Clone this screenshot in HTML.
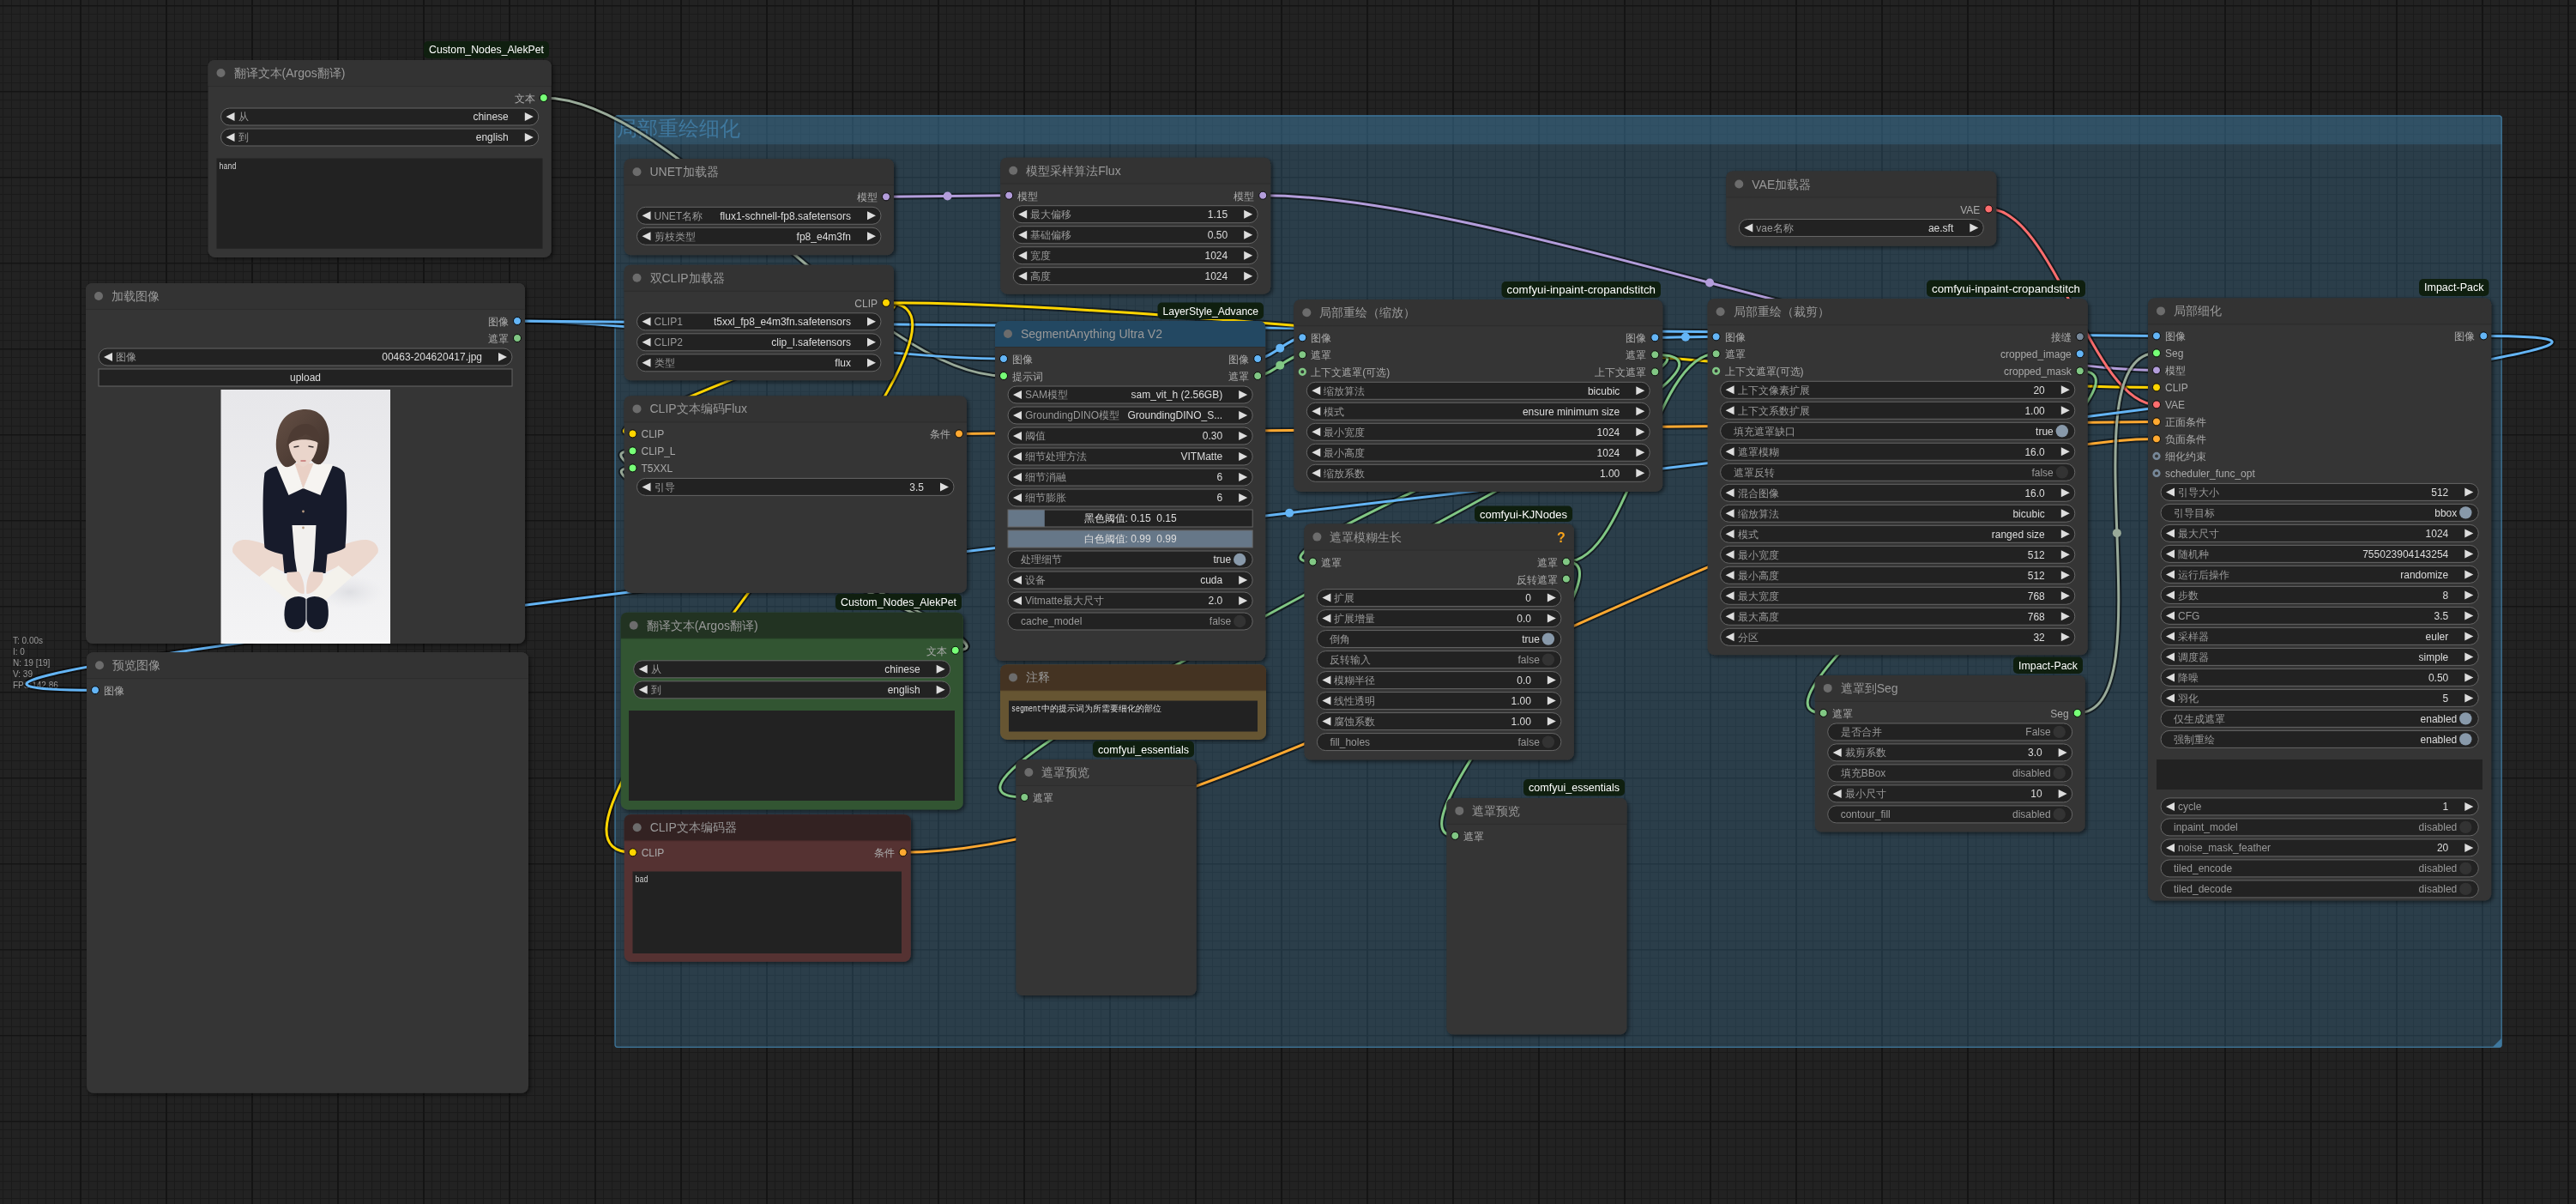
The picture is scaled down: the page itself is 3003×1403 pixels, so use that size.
<!DOCTYPE html>
<html><head><meta charset="utf-8"><title>ComfyUI</title>
<style>html,body{margin:0;padding:0;background:#222;width:3003px;height:1403px;overflow:hidden;font-family:'Liberation Sans', sans-serif}</style>
</head><body>
<svg width="3003" height="1403" viewBox="0 0 3003 1403" style="position:absolute;left:0;top:0;will-change:transform;font-family:'Liberation Sans', sans-serif">
<defs>
<pattern id="grid" patternUnits="userSpaceOnUse" x="3" y="6" width="100" height="100"><rect width="100" height="100" fill="#222222"/>
<rect x="0" y="0" width="1" height="100" fill="#1a1a1a"/>
<rect x="0" y="0" width="100" height="1" fill="#1a1a1a"/>
<rect x="10" y="0" width="1" height="100" fill="#1a1a1a"/>
<rect x="0" y="10" width="100" height="1" fill="#1a1a1a"/>
<rect x="20" y="0" width="1" height="100" fill="#1a1a1a"/>
<rect x="0" y="20" width="100" height="1" fill="#1a1a1a"/>
<rect x="30" y="0" width="1" height="100" fill="#1a1a1a"/>
<rect x="0" y="30" width="100" height="1" fill="#1a1a1a"/>
<rect x="40" y="0" width="1" height="100" fill="#1a1a1a"/>
<rect x="0" y="40" width="100" height="1" fill="#1a1a1a"/>
<rect x="50" y="0" width="1" height="100" fill="#1a1a1a"/>
<rect x="0" y="50" width="100" height="1" fill="#1a1a1a"/>
<rect x="60" y="0" width="1" height="100" fill="#1a1a1a"/>
<rect x="0" y="60" width="100" height="1" fill="#1a1a1a"/>
<rect x="70" y="0" width="1" height="100" fill="#1a1a1a"/>
<rect x="0" y="70" width="100" height="1" fill="#1a1a1a"/>
<rect x="80" y="0" width="1" height="100" fill="#1a1a1a"/>
<rect x="0" y="80" width="100" height="1" fill="#1a1a1a"/>
<rect x="90" y="0" width="1" height="100" fill="#1a1a1a"/>
<rect x="0" y="90" width="100" height="1" fill="#1a1a1a"/>
<rect x="90" y="0" width="2" height="100" fill="#141414"/><rect x="0" y="0" width="100" height="1.5" fill="#141414"/>
</pattern>
<filter id="sh" x="-5%" y="-5%" width="110%" height="110%"><feDropShadow dx="2" dy="2" stdDeviation="2.5" flood-color="#000" flood-opacity="0.55"/></filter>
</defs>
<rect width="3003" height="1403" fill="url(#grid)"/>
<rect x="716.3" y="134.2" width="2200.7" height="1086.8" rx="4" fill="#3f789e" fill-opacity="0.32"/>
<path d="M716.3,168.2 L716.3,138.2 Q716.3,134.2 720.3,134.2 L2913.0,134.2 Q2917.0,134.2 2917.0,138.2 L2917.0,168.2 Z" fill="#3f789e" fill-opacity="0.32"/>
<rect x="717.0999999999999" y="135.0" width="2199.1" height="1085.2" rx="3" fill="none" stroke="#3f789e" stroke-opacity="0.85" stroke-width="1.4"/>
<text x="719.00" y="157.50" font-size="24" fill="#3f789e" text-anchor="start" >局部重绘细化</text>
<path d="M2916.0 1210.0 L2916.0 1220.0 L2906.0 1220.0 Z" fill="#3f789e"/>
<text x="15.00" y="750.00" font-size="10" fill="#9a9a9a" text-anchor="start" >T: 0.00s</text>
<text x="15.00" y="763.00" font-size="10" fill="#9a9a9a" text-anchor="start" >I: 0</text>
<text x="15.00" y="776.00" font-size="10" fill="#9a9a9a" text-anchor="start" >N: 19 [19]</text>
<text x="15.00" y="789.00" font-size="10" fill="#9a9a9a" text-anchor="start" >V: 39</text>
<text x="15.00" y="802.00" font-size="10" fill="#9a9a9a" text-anchor="start" >FPS:142.86</text>
<path d="M633.80,114.00 C790.42,114.00 1013.38,438.00 1170.00,438.00" fill="none" stroke="#000" stroke-opacity="0.5" stroke-width="7"/>
<path d="M633.80,114.00 C790.42,114.00 1013.38,438.00 1170.00,438.00" fill="none" stroke="#99AA99" stroke-width="3"/>
<circle cx="901.90" cy="276.00" r="5" fill="#99AA99"/>
<path d="M603.00,374.00 C745.18,374.00 1027.82,418.00 1170.00,418.00" fill="none" stroke="#000" stroke-opacity="0.5" stroke-width="7"/>
<path d="M603.00,374.00 C745.18,374.00 1027.82,418.00 1170.00,418.00" fill="none" stroke="#64B5F6" stroke-width="3"/>
<circle cx="886.50" cy="396.00" r="5" fill="#64B5F6"/>
<path d="M603.00,374.00 C1080.77,374.00 2036.23,391.40 2514.00,391.40" fill="none" stroke="#000" stroke-opacity="0.5" stroke-width="7"/>
<path d="M603.00,374.00 C1080.77,374.00 2036.23,391.40 2514.00,391.40" fill="none" stroke="#64B5F6" stroke-width="3"/>
<circle cx="1558.50" cy="382.70" r="5" fill="#64B5F6"/>
<path d="M1033.00,229.30 C1068.80,229.30 1140.40,227.70 1176.20,227.70" fill="none" stroke="#000" stroke-opacity="0.5" stroke-width="7"/>
<path d="M1033.00,229.30 C1068.80,229.30 1140.40,227.70 1176.20,227.70" fill="none" stroke="#B39DDB" stroke-width="3"/>
<circle cx="1104.60" cy="228.50" r="5" fill="#B39DDB"/>
<path d="M1472.20,227.70 C1737.58,227.70 2248.62,431.40 2514.00,431.40" fill="none" stroke="#000" stroke-opacity="0.5" stroke-width="7"/>
<path d="M1472.20,227.70 C1737.58,227.70 2248.62,431.40 2514.00,431.40" fill="none" stroke="#B39DDB" stroke-width="3"/>
<circle cx="1993.10" cy="329.55" r="5" fill="#B39DDB"/>
<path d="M1033.00,352.80 C1116.14,352.80 654.36,505.40 737.50,505.40" fill="none" stroke="#000" stroke-opacity="0.5" stroke-width="7"/>
<path d="M1033.00,352.80 C1116.14,352.80 654.36,505.40 737.50,505.40" fill="none" stroke="#FFD500" stroke-width="3"/>
<circle cx="885.25" cy="429.10" r="5" fill="#FFD500"/>
<path d="M1033.00,352.80 C1209.32,352.80 561.38,993.30 737.70,993.30" fill="none" stroke="#000" stroke-opacity="0.5" stroke-width="7"/>
<path d="M1033.00,352.80 C1209.32,352.80 561.38,993.30 737.70,993.30" fill="none" stroke="#FFD500" stroke-width="3"/>
<circle cx="885.35" cy="673.05" r="5" fill="#FFD500"/>
<path d="M1033.00,352.80 C1404.07,352.80 2142.93,451.40 2514.00,451.40" fill="none" stroke="#000" stroke-opacity="0.5" stroke-width="7"/>
<path d="M1033.00,352.80 C1404.07,352.80 2142.93,451.40 2514.00,451.40" fill="none" stroke="#FFD500" stroke-width="3"/>
<circle cx="1773.50" cy="402.10" r="5" fill="#FFD500"/>
<path d="M2318.30,243.50 C2393.40,243.50 2438.90,471.40 2514.00,471.40" fill="none" stroke="#000" stroke-opacity="0.5" stroke-width="7"/>
<path d="M2318.30,243.50 C2393.40,243.50 2438.90,471.40 2514.00,471.40" fill="none" stroke="#FF6E6E" stroke-width="3"/>
<circle cx="2416.15" cy="357.45" r="5" fill="#FF6E6E"/>
<path d="M1118.00,505.40 C1467.02,505.40 2164.98,491.40 2514.00,491.40" fill="none" stroke="#000" stroke-opacity="0.5" stroke-width="7"/>
<path d="M1118.00,505.40 C1467.02,505.40 2164.98,491.40 2514.00,491.40" fill="none" stroke="#FFA931" stroke-width="3"/>
<circle cx="1816.00" cy="498.40" r="5" fill="#FFA931"/>
<path d="M1052.70,993.30 C1437.38,993.30 2129.32,511.40 2514.00,511.40" fill="none" stroke="#000" stroke-opacity="0.5" stroke-width="7"/>
<path d="M1052.70,993.30 C1437.38,993.30 2129.32,511.40 2514.00,511.40" fill="none" stroke="#FFA931" stroke-width="3"/>
<circle cx="1783.35" cy="752.35" r="5" fill="#FFA931"/>
<path d="M1113.70,757.80 C1224.25,757.80 626.95,525.40 737.50,525.40" fill="none" stroke="#000" stroke-opacity="0.5" stroke-width="7"/>
<path d="M1113.70,757.80 C1224.25,757.80 626.95,525.40 737.50,525.40" fill="none" stroke="#99AA99" stroke-width="3"/>
<circle cx="925.60" cy="641.60" r="5" fill="#99AA99"/>
<path d="M1113.70,757.80 C1221.70,757.80 629.50,545.40 737.50,545.40" fill="none" stroke="#000" stroke-opacity="0.5" stroke-width="7"/>
<path d="M1113.70,757.80 C1221.70,757.80 629.50,545.40 737.50,545.40" fill="none" stroke="#99AA99" stroke-width="3"/>
<circle cx="925.60" cy="651.60" r="5" fill="#99AA99"/>
<path d="M1466.20,418.00 C1480.61,418.00 1503.89,393.30 1518.30,393.30" fill="none" stroke="#000" stroke-opacity="0.5" stroke-width="7"/>
<path d="M1466.20,418.00 C1480.61,418.00 1503.89,393.30 1518.30,393.30" fill="none" stroke="#64B5F6" stroke-width="3"/>
<circle cx="1492.25" cy="405.65" r="5" fill="#64B5F6"/>
<path d="M1466.20,438.00 C1480.61,438.00 1503.89,413.30 1518.30,413.30" fill="none" stroke="#000" stroke-opacity="0.5" stroke-width="7"/>
<path d="M1466.20,438.00 C1480.61,438.00 1503.89,413.30 1518.30,413.30" fill="none" stroke="#81C784" stroke-width="3"/>
<circle cx="1492.25" cy="425.65" r="5" fill="#81C784"/>
<path d="M1929.30,393.30 C1947.13,393.30 1982.77,392.30 2000.60,392.30" fill="none" stroke="#000" stroke-opacity="0.5" stroke-width="7"/>
<path d="M1929.30,393.30 C1947.13,393.30 1982.77,392.30 2000.60,392.30" fill="none" stroke="#64B5F6" stroke-width="3"/>
<circle cx="1964.95" cy="392.80" r="5" fill="#64B5F6"/>
<path d="M1929.30,413.30 C2045.85,413.30 1413.85,654.60 1530.40,654.60" fill="none" stroke="#000" stroke-opacity="0.5" stroke-width="7"/>
<path d="M1929.30,413.30 C2045.85,413.30 1413.85,654.60 1530.40,654.60" fill="none" stroke="#81C784" stroke-width="3"/>
<circle cx="1729.85" cy="533.95" r="5" fill="#81C784"/>
<path d="M1929.30,413.30 C2153.77,413.30 969.83,929.00 1194.30,929.00" fill="none" stroke="#000" stroke-opacity="0.5" stroke-width="7"/>
<path d="M1929.30,413.30 C2153.77,413.30 969.83,929.00 1194.30,929.00" fill="none" stroke="#81C784" stroke-width="3"/>
<circle cx="1561.80" cy="671.15" r="5" fill="#81C784"/>
<path d="M1825.90,654.60 C1900.58,654.60 1925.92,412.30 2000.60,412.30" fill="none" stroke="#000" stroke-opacity="0.5" stroke-width="7"/>
<path d="M1825.90,654.60 C1900.58,654.60 1925.92,412.30 2000.60,412.30" fill="none" stroke="#81C784" stroke-width="3"/>
<circle cx="1913.25" cy="533.45" r="5" fill="#81C784"/>
<path d="M1825.90,654.60 C1912.05,654.60 1610.15,973.90 1696.30,973.90" fill="none" stroke="#000" stroke-opacity="0.5" stroke-width="7"/>
<path d="M1825.90,654.60 C1912.05,654.60 1610.15,973.90 1696.30,973.90" fill="none" stroke="#81C784" stroke-width="3"/>
<circle cx="1761.10" cy="814.25" r="5" fill="#81C784"/>
<path d="M2424.80,432.30 C2549.39,432.30 2001.11,830.90 2125.70,830.90" fill="none" stroke="#000" stroke-opacity="0.5" stroke-width="7"/>
<path d="M2424.80,432.30 C2549.39,432.30 2001.11,830.90 2125.70,830.90" fill="none" stroke="#81C784" stroke-width="3"/>
<circle cx="2275.25" cy="631.60" r="5" fill="#81C784"/>
<path d="M2421.70,830.90 C2529.08,830.90 2406.62,411.40 2514.00,411.40" fill="none" stroke="#000" stroke-opacity="0.5" stroke-width="7"/>
<path d="M2421.70,830.90 C2529.08,830.90 2406.62,411.40 2514.00,411.40" fill="none" stroke="#99AA99" stroke-width="3"/>
<circle cx="2467.85" cy="621.15" r="5" fill="#99AA99"/>
<path d="M2895.30,391.40 C3598.98,391.40 -592.68,804.20 111.00,804.20" fill="none" stroke="#000" stroke-opacity="0.5" stroke-width="7"/>
<path d="M2895.30,391.40 C3598.98,391.40 -592.68,804.20 111.00,804.20" fill="none" stroke="#64B5F6" stroke-width="3"/>
<circle cx="1503.15" cy="597.80" r="5" fill="#64B5F6"/>
<g>
<rect x="242.50" y="70.00" width="400.30" height="229.90" rx="8" fill="#353535" filter="url(#sh)"/>
<path d="M242.50,100.00 L242.50,78.00 Q242.50,70.00 250.50,70.00 L634.80,70.00 Q642.80,70.00 642.80,78.00 L642.80,100.00 Z" fill="#333333"/>
<rect x="242.50" y="100.00" width="400.30" height="1" fill="#000" fill-opacity="0.15"/>
<circle cx="257.50" cy="85.00" r="5" fill="#6c6c6c"/>
<text x="272.50" y="90.00" font-size="14" fill="#999" text-anchor="start" >翻译文本(Argos翻译)</text>
<circle cx="633.80" cy="114.00" r="4.5" fill="#77FF77" stroke="#000" stroke-opacity="0.9" stroke-width="1"/>
<text x="623.80" y="119.00" font-size="12" fill="#AAA" text-anchor="end" >文本</text>
<rect x="257.50" y="126.00" width="370.30" height="20.00" rx="10" fill="#222" stroke="#666" stroke-width="1"/>
<path d="M273.50,131.00 L263.50,136.00 L273.50,141.00 Z" fill="#DDD"/>
<path d="M611.80,131.00 L621.80,136.00 L611.80,141.00 Z" fill="#DDD"/>
<text x="277.50" y="140.20" font-size="12" fill="#999" text-anchor="start" >从</text>
<text x="592.80" y="140.20" font-size="12" fill="#DDD" text-anchor="end" >chinese</text>
<rect x="257.50" y="150.00" width="370.30" height="20.00" rx="10" fill="#222" stroke="#666" stroke-width="1"/>
<path d="M273.50,155.00 L263.50,160.00 L273.50,165.00 Z" fill="#DDD"/>
<path d="M611.80,155.00 L621.80,160.00 L611.80,165.00 Z" fill="#DDD"/>
<text x="277.50" y="164.20" font-size="12" fill="#999" text-anchor="start" >到</text>
<text x="592.80" y="164.20" font-size="12" fill="#DDD" text-anchor="end" >english</text>
<rect x="252.5" y="184.5" width="380.0" height="105.19999999999999" fill="#222"/>
<text x="255.5" y="196.5" font-size="10" fill="#DDD" font-family="Liberation Mono, monospace" textLength="20" lengthAdjust="spacingAndGlyphs">hand</text>
<rect x="494.00" y="48.00" width="146.00" height="20.00" rx="5" fill="#0f1f0f" />
<text x="567.00" y="62.30" font-size="12.5" fill="#fff" text-anchor="middle" textLength="134.0" lengthAdjust="spacingAndGlyphs">Custom_Nodes_AlekPet</text>
</g>
<g>
<rect x="100.00" y="330.00" width="512.00" height="420.00" rx="8" fill="#353535" filter="url(#sh)"/>
<path d="M100.00,360.00 L100.00,338.00 Q100.00,330.00 108.00,330.00 L604.00,330.00 Q612.00,330.00 612.00,338.00 L612.00,360.00 Z" fill="#333333"/>
<rect x="100.00" y="360.00" width="512.00" height="1" fill="#000" fill-opacity="0.15"/>
<circle cx="115.00" cy="345.00" r="5" fill="#6c6c6c"/>
<text x="130.00" y="350.00" font-size="14" fill="#999" text-anchor="start" >加载图像</text>
<circle cx="603.00" cy="374.00" r="4.5" fill="#64B5F6" stroke="#000" stroke-opacity="0.9" stroke-width="1"/>
<text x="593.00" y="379.00" font-size="12" fill="#AAA" text-anchor="end" >图像</text>
<circle cx="603.00" cy="394.00" r="4.5" fill="#81C784" stroke="#000" stroke-opacity="0.9" stroke-width="1"/>
<text x="593.00" y="399.00" font-size="12" fill="#AAA" text-anchor="end" >遮罩</text>
<rect x="115.00" y="406.00" width="482.00" height="20.00" rx="10" fill="#222" stroke="#666" stroke-width="1"/>
<path d="M131.00,411.00 L121.00,416.00 L131.00,421.00 Z" fill="#DDD"/>
<path d="M581.00,411.00 L591.00,416.00 L581.00,421.00 Z" fill="#DDD"/>
<text x="135.00" y="420.20" font-size="12" fill="#999" text-anchor="start" >图像</text>
<text x="562.00" y="420.20" font-size="12" fill="#DDD" text-anchor="end" >00463-204620417.jpg</text>
<rect x="115.00" y="430.00" width="482.00" height="20" fill="#222" stroke="#666" stroke-width="1"/>
<text x="356.00" y="444.20" font-size="12" fill="#DDD" text-anchor="middle" >upload</text>
<g transform="translate(257.5,454)"><defs><linearGradient id="gbg" x1="0" y1="0" x2="0" y2="1"><stop offset="0" stop-color="#e7e7ea"/><stop offset="0.6" stop-color="#eeeef0"/><stop offset="1" stop-color="#f4f4f5"/></linearGradient><radialGradient id="gsh" cx="0.5" cy="0.5" r="0.5"><stop offset="0" stop-color="#c6c8cf" stop-opacity="0.9"/><stop offset="1" stop-color="#dcdde2" stop-opacity="0"/></radialGradient><linearGradient id="ghair" x1="0" y1="0" x2="1" y2="1"><stop offset="0" stop-color="#655045"/><stop offset="1" stop-color="#3f302a"/></linearGradient></defs><rect width="197.5" height="296" fill="url(#gbg)"/><ellipse cx="150" cy="236" rx="40" ry="20" fill="url(#gsh)" opacity="0.5"/><path d="M70 187 C56 182 38 174 26 175 C16 176 12 184 14 190 C22 200 34 210 45 218 L60 206 C66 209 72 212 77 214 L74 194 Z" fill="#ecd8ce"/><path d="M126 187 C140 182 158 174 170 175 C180 176 185 184 183 190 C176 200 164 210 153 218 L137 206 C130 209 124 212 120 214 L123 194 Z" fill="#ecd8ce"/><path d="M82 158 L112 158 L113 214 C105 218 90 218 82 214 Z" fill="#f2f0ee"/><path d="M45 218 L60 206 L97 233 L82 249 Z" fill="#f4f2ec"/><path d="M153 218 L137 205 L103 233 L118 249 Z" fill="#f4f2ec"/><path d="M76 248 C80 242 92 238 99 244 L99 268 C98 278 88 282 80 278 C74 274 72 262 76 248 Z" fill="#151a29"/><path d="M124 248 C120 242 108 238 100 244 L100 268 C101 278 111 282 119 278 C125 274 127 262 124 248 Z" fill="#151a29"/><path d="M74 270 C76 280 92 284 99 274 L99 278 C92 286 76 284 74 274 Z" fill="#efede9"/><path d="M125 270 C123 280 107 284 100 274 L100 278 C107 286 123 284 125 274 Z" fill="#efede9"/><path d="M51 97 C58 89 72 87 86 87 L110 87 C126 87 139 89 144 97 C148 120 147 160 145 184 C140 188 130 190 124 192 L122 214 L107 214 L109 196 L111 158 L83 158 L86 196 L89 214 L74 214 L72 192 C64 190 56 188 51 184 C49 160 48 120 51 97 Z" fill="#171b2b"/><path d="M77 213 L91 212 C96 220 98 230 97 238 C90 238 82 230 77 222 Z" fill="#ebd5cb"/><path d="M119 213 L105 212 C100 220 99 230 100 238 C107 238 115 230 119 222 Z" fill="#ebd5cb"/><path d="M85 86 L109 86 L96 116 Z" fill="#e9d0c5"/><path d="M64 87 L86 86 L96 115 L79 123 Z" fill="#f6f4f1"/><path d="M131 87 L108 86 L96 115 L116 123 Z" fill="#f6f4f1"/><circle cx="96" cy="142" r="1.4" fill="#b89a80"/><circle cx="96" cy="161" r="1.4" fill="#b89a80"/><path d="M75 90 C65 84 62 66 66 50 C70 32 82 23 99 23 C114 23 125 34 126 52 C127 68 124 82 116 87 C110 88 106 84 102 78 L92 78 C88 86 82 91 75 90 Z" fill="url(#ghair)"/><path d="M79 63 C80 74 86 86 96 90 C106 86 112 74 113 62 C106 57 86 57 79 63 Z" fill="#ead5cb"/><path d="M77 66 C78 50 86 40 99 40 C111 40 116 52 115 64 C110 56 104 54 99 52 C92 56 84 58 77 66 Z" fill="#4d3b33"/><path d="M85 67 L91 66 M102 66 L108 67" stroke="#3a3030" stroke-width="1.3"/><path d="M93 83 L99 83" stroke="#c06a6a" stroke-width="1.4"/></g>
</g>
<g>
<rect x="101.00" y="760.20" width="515.00" height="513.60" rx="8" fill="#353535" filter="url(#sh)"/>
<path d="M101.00,790.20 L101.00,768.20 Q101.00,760.20 109.00,760.20 L608.00,760.20 Q616.00,760.20 616.00,768.20 L616.00,790.20 Z" fill="#333333"/>
<rect x="101.00" y="790.20" width="515.00" height="1" fill="#000" fill-opacity="0.15"/>
<circle cx="116.00" cy="775.20" r="5" fill="#6c6c6c"/>
<text x="131.00" y="780.20" font-size="14" fill="#999" text-anchor="start" >预览图像</text>
<circle cx="111.00" cy="804.20" r="4.5" fill="#64B5F6" stroke="#000" stroke-opacity="0.9" stroke-width="1"/>
<text x="121.00" y="809.20" font-size="12" fill="#AAA" text-anchor="start" >图像</text>
</g>
<g>
<rect x="727.50" y="185.30" width="314.50" height="112.00" rx="8" fill="#353535" filter="url(#sh)"/>
<path d="M727.50,215.30 L727.50,193.30 Q727.50,185.30 735.50,185.30 L1034.00,185.30 Q1042.00,185.30 1042.00,193.30 L1042.00,215.30 Z" fill="#333333"/>
<rect x="727.50" y="215.30" width="314.50" height="1" fill="#000" fill-opacity="0.15"/>
<circle cx="742.50" cy="200.30" r="5" fill="#6c6c6c"/>
<text x="757.50" y="205.30" font-size="14" fill="#999" text-anchor="start" >UNET加载器</text>
<circle cx="1033.00" cy="229.30" r="4.5" fill="#B39DDB" stroke="#000" stroke-opacity="0.9" stroke-width="1"/>
<text x="1023.00" y="234.30" font-size="12" fill="#AAA" text-anchor="end" >模型</text>
<rect x="742.50" y="241.30" width="284.50" height="20.00" rx="10" fill="#222" stroke="#666" stroke-width="1"/>
<path d="M758.50,246.30 L748.50,251.30 L758.50,256.30 Z" fill="#DDD"/>
<path d="M1011.00,246.30 L1021.00,251.30 L1011.00,256.30 Z" fill="#DDD"/>
<text x="762.50" y="255.50" font-size="12" fill="#999" text-anchor="start" >UNET名称</text>
<text x="992.00" y="255.50" font-size="12" fill="#DDD" text-anchor="end" >flux1-schnell-fp8.safetensors</text>
<rect x="742.50" y="265.30" width="284.50" height="20.00" rx="10" fill="#222" stroke="#666" stroke-width="1"/>
<path d="M758.50,270.30 L748.50,275.30 L758.50,280.30 Z" fill="#DDD"/>
<path d="M1011.00,270.30 L1021.00,275.30 L1011.00,280.30 Z" fill="#DDD"/>
<text x="762.50" y="279.50" font-size="12" fill="#999" text-anchor="start" >剪枝类型</text>
<text x="992.00" y="279.50" font-size="12" fill="#DDD" text-anchor="end" >fp8_e4m3fn</text>
</g>
<g>
<rect x="727.50" y="308.80" width="314.50" height="134.50" rx="8" fill="#353535" filter="url(#sh)"/>
<path d="M727.50,338.80 L727.50,316.80 Q727.50,308.80 735.50,308.80 L1034.00,308.80 Q1042.00,308.80 1042.00,316.80 L1042.00,338.80 Z" fill="#333333"/>
<rect x="727.50" y="338.80" width="314.50" height="1" fill="#000" fill-opacity="0.15"/>
<circle cx="742.50" cy="323.80" r="5" fill="#6c6c6c"/>
<text x="757.50" y="328.80" font-size="14" fill="#999" text-anchor="start" >双CLIP加载器</text>
<circle cx="1033.00" cy="352.80" r="4.5" fill="#FFD500" stroke="#000" stroke-opacity="0.9" stroke-width="1"/>
<text x="1023.00" y="357.80" font-size="12" fill="#AAA" text-anchor="end" >CLIP</text>
<rect x="742.50" y="364.80" width="284.50" height="20.00" rx="10" fill="#222" stroke="#666" stroke-width="1"/>
<path d="M758.50,369.80 L748.50,374.80 L758.50,379.80 Z" fill="#DDD"/>
<path d="M1011.00,369.80 L1021.00,374.80 L1011.00,379.80 Z" fill="#DDD"/>
<text x="762.50" y="379.00" font-size="12" fill="#999" text-anchor="start" >CLIP1</text>
<text x="992.00" y="379.00" font-size="12" fill="#DDD" text-anchor="end" >t5xxl_fp8_e4m3fn.safetensors</text>
<rect x="742.50" y="388.80" width="284.50" height="20.00" rx="10" fill="#222" stroke="#666" stroke-width="1"/>
<path d="M758.50,393.80 L748.50,398.80 L758.50,403.80 Z" fill="#DDD"/>
<path d="M1011.00,393.80 L1021.00,398.80 L1011.00,403.80 Z" fill="#DDD"/>
<text x="762.50" y="403.00" font-size="12" fill="#999" text-anchor="start" >CLIP2</text>
<text x="992.00" y="403.00" font-size="12" fill="#DDD" text-anchor="end" >clip_l.safetensors</text>
<rect x="742.50" y="412.80" width="284.50" height="20.00" rx="10" fill="#222" stroke="#666" stroke-width="1"/>
<path d="M758.50,417.80 L748.50,422.80 L758.50,427.80 Z" fill="#DDD"/>
<path d="M1011.00,417.80 L1021.00,422.80 L1011.00,427.80 Z" fill="#DDD"/>
<text x="762.50" y="427.00" font-size="12" fill="#999" text-anchor="start" >类型</text>
<text x="992.00" y="427.00" font-size="12" fill="#DDD" text-anchor="end" >flux</text>
</g>
<g>
<rect x="727.50" y="461.40" width="399.50" height="229.50" rx="8" fill="#353535" filter="url(#sh)"/>
<path d="M727.50,491.40 L727.50,469.40 Q727.50,461.40 735.50,461.40 L1119.00,461.40 Q1127.00,461.40 1127.00,469.40 L1127.00,491.40 Z" fill="#333333"/>
<rect x="727.50" y="491.40" width="399.50" height="1" fill="#000" fill-opacity="0.15"/>
<circle cx="742.50" cy="476.40" r="5" fill="#6c6c6c"/>
<text x="757.50" y="481.40" font-size="14" fill="#999" text-anchor="start" >CLIP文本编码Flux</text>
<circle cx="737.50" cy="505.40" r="4.5" fill="#FFD500" stroke="#000" stroke-opacity="0.9" stroke-width="1"/>
<text x="747.50" y="510.40" font-size="12" fill="#AAA" text-anchor="start" >CLIP</text>
<circle cx="737.50" cy="525.40" r="4.5" fill="#77FF77" stroke="#000" stroke-opacity="0.9" stroke-width="1"/>
<text x="747.50" y="530.40" font-size="12" fill="#AAA" text-anchor="start" >CLIP_L</text>
<circle cx="737.50" cy="545.40" r="4.5" fill="#77FF77" stroke="#000" stroke-opacity="0.9" stroke-width="1"/>
<text x="747.50" y="550.40" font-size="12" fill="#AAA" text-anchor="start" >T5XXL</text>
<circle cx="1118.00" cy="505.40" r="4.5" fill="#FFA931" stroke="#000" stroke-opacity="0.9" stroke-width="1"/>
<text x="1108.00" y="510.40" font-size="12" fill="#AAA" text-anchor="end" >条件</text>
<rect x="742.50" y="557.40" width="369.50" height="20.00" rx="10" fill="#222" stroke="#666" stroke-width="1"/>
<path d="M758.50,562.40 L748.50,567.40 L758.50,572.40 Z" fill="#DDD"/>
<path d="M1096.00,562.40 L1106.00,567.40 L1096.00,572.40 Z" fill="#DDD"/>
<text x="762.50" y="571.60" font-size="12" fill="#999" text-anchor="start" >引导</text>
<text x="1077.00" y="571.60" font-size="12" fill="#DDD" text-anchor="end" >3.5</text>
</g>
<g>
<rect x="723.70" y="713.80" width="399.00" height="229.60" rx="8" fill="#335533" filter="url(#sh)"/>
<path d="M723.70,743.80 L723.70,721.80 Q723.70,713.80 731.70,713.80 L1114.70,713.80 Q1122.70,713.80 1122.70,721.80 L1122.70,743.80 Z" fill="#223322"/>
<rect x="723.70" y="743.80" width="399.00" height="1" fill="#000" fill-opacity="0.15"/>
<circle cx="738.70" cy="728.80" r="5" fill="#6c6c6c"/>
<text x="753.70" y="733.80" font-size="14" fill="#999" text-anchor="start" >翻译文本(Argos翻译)</text>
<circle cx="1113.70" cy="757.80" r="4.5" fill="#77FF77" stroke="#000" stroke-opacity="0.9" stroke-width="1"/>
<text x="1103.70" y="762.80" font-size="12" fill="#AAA" text-anchor="end" >文本</text>
<rect x="738.70" y="769.80" width="369.00" height="20.00" rx="10" fill="#222" stroke="#666" stroke-width="1"/>
<path d="M754.70,774.80 L744.70,779.80 L754.70,784.80 Z" fill="#DDD"/>
<path d="M1091.70,774.80 L1101.70,779.80 L1091.70,784.80 Z" fill="#DDD"/>
<text x="758.70" y="784.00" font-size="12" fill="#999" text-anchor="start" >从</text>
<text x="1072.70" y="784.00" font-size="12" fill="#DDD" text-anchor="end" >chinese</text>
<rect x="738.70" y="793.80" width="369.00" height="20.00" rx="10" fill="#222" stroke="#666" stroke-width="1"/>
<path d="M754.70,798.80 L744.70,803.80 L754.70,808.80 Z" fill="#DDD"/>
<path d="M1091.70,798.80 L1101.70,803.80 L1091.70,808.80 Z" fill="#DDD"/>
<text x="758.70" y="808.00" font-size="12" fill="#999" text-anchor="start" >到</text>
<text x="1072.70" y="808.00" font-size="12" fill="#DDD" text-anchor="end" >english</text>
<rect x="733" y="828" width="380" height="105" fill="#222"/>
<rect x="974.00" y="692.00" width="147.00" height="19.00" rx="5" fill="#0f1f0f" />
<text x="1047.50" y="706.30" font-size="12.5" fill="#fff" text-anchor="middle" textLength="135.0" lengthAdjust="spacingAndGlyphs">Custom_Nodes_AlekPet</text>
</g>
<g>
<rect x="727.70" y="949.30" width="334.00" height="171.50" rx="8" fill="#553333" filter="url(#sh)"/>
<path d="M727.70,979.30 L727.70,957.30 Q727.70,949.30 735.70,949.30 L1053.70,949.30 Q1061.70,949.30 1061.70,957.30 L1061.70,979.30 Z" fill="#332222"/>
<rect x="727.70" y="979.30" width="334.00" height="1" fill="#000" fill-opacity="0.15"/>
<circle cx="742.70" cy="964.30" r="5" fill="#6c6c6c"/>
<text x="757.70" y="969.30" font-size="14" fill="#999" text-anchor="start" >CLIP文本编码器</text>
<circle cx="737.70" cy="993.30" r="4.5" fill="#FFD500" stroke="#000" stroke-opacity="0.9" stroke-width="1"/>
<text x="747.70" y="998.30" font-size="12" fill="#AAA" text-anchor="start" >CLIP</text>
<circle cx="1052.70" cy="993.30" r="4.5" fill="#FFA931" stroke="#000" stroke-opacity="0.9" stroke-width="1"/>
<text x="1042.70" y="998.30" font-size="12" fill="#AAA" text-anchor="end" >条件</text>
<rect x="737.5" y="1015.5" width="313.5" height="95.5" fill="#222"/>
<text x="740.5" y="1027.5" font-size="10" fill="#DDD" font-family="Liberation Mono, monospace" textLength="15" lengthAdjust="spacingAndGlyphs">bad</text>
</g>
<g>
<rect x="1166.20" y="183.70" width="315.00" height="159.00" rx="8" fill="#353535" filter="url(#sh)"/>
<path d="M1166.20,213.70 L1166.20,191.70 Q1166.20,183.70 1174.20,183.70 L1473.20,183.70 Q1481.20,183.70 1481.20,191.70 L1481.20,213.70 Z" fill="#333333"/>
<rect x="1166.20" y="213.70" width="315.00" height="1" fill="#000" fill-opacity="0.15"/>
<circle cx="1181.20" cy="198.70" r="5" fill="#6c6c6c"/>
<text x="1196.20" y="203.70" font-size="14" fill="#999" text-anchor="start" >模型采样算法Flux</text>
<circle cx="1176.20" cy="227.70" r="4.5" fill="#B39DDB" stroke="#000" stroke-opacity="0.9" stroke-width="1"/>
<text x="1186.20" y="232.70" font-size="12" fill="#AAA" text-anchor="start" >模型</text>
<circle cx="1472.20" cy="227.70" r="4.5" fill="#B39DDB" stroke="#000" stroke-opacity="0.9" stroke-width="1"/>
<text x="1462.20" y="232.70" font-size="12" fill="#AAA" text-anchor="end" >模型</text>
<rect x="1181.20" y="239.70" width="285.00" height="20.00" rx="10" fill="#222" stroke="#666" stroke-width="1"/>
<path d="M1197.20,244.70 L1187.20,249.70 L1197.20,254.70 Z" fill="#DDD"/>
<path d="M1450.20,244.70 L1460.20,249.70 L1450.20,254.70 Z" fill="#DDD"/>
<text x="1201.20" y="253.90" font-size="12" fill="#999" text-anchor="start" >最大偏移</text>
<text x="1431.20" y="253.90" font-size="12" fill="#DDD" text-anchor="end" >1.15</text>
<rect x="1181.20" y="263.70" width="285.00" height="20.00" rx="10" fill="#222" stroke="#666" stroke-width="1"/>
<path d="M1197.20,268.70 L1187.20,273.70 L1197.20,278.70 Z" fill="#DDD"/>
<path d="M1450.20,268.70 L1460.20,273.70 L1450.20,278.70 Z" fill="#DDD"/>
<text x="1201.20" y="277.90" font-size="12" fill="#999" text-anchor="start" >基础偏移</text>
<text x="1431.20" y="277.90" font-size="12" fill="#DDD" text-anchor="end" >0.50</text>
<rect x="1181.20" y="287.70" width="285.00" height="20.00" rx="10" fill="#222" stroke="#666" stroke-width="1"/>
<path d="M1197.20,292.70 L1187.20,297.70 L1197.20,302.70 Z" fill="#DDD"/>
<path d="M1450.20,292.70 L1460.20,297.70 L1450.20,302.70 Z" fill="#DDD"/>
<text x="1201.20" y="301.90" font-size="12" fill="#999" text-anchor="start" >宽度</text>
<text x="1431.20" y="301.90" font-size="12" fill="#DDD" text-anchor="end" >1024</text>
<rect x="1181.20" y="311.70" width="285.00" height="20.00" rx="10" fill="#222" stroke="#666" stroke-width="1"/>
<path d="M1197.20,316.70 L1187.20,321.70 L1197.20,326.70 Z" fill="#DDD"/>
<path d="M1450.20,316.70 L1460.20,321.70 L1450.20,326.70 Z" fill="#DDD"/>
<text x="1201.20" y="325.90" font-size="12" fill="#999" text-anchor="start" >高度</text>
<text x="1431.20" y="325.90" font-size="12" fill="#DDD" text-anchor="end" >1024</text>
</g>
<g>
<rect x="1160.00" y="374.00" width="315.20" height="396.10" rx="8" fill="#353535" filter="url(#sh)"/>
<path d="M1160.00,404.00 L1160.00,382.00 Q1160.00,374.00 1168.00,374.00 L1467.20,374.00 Q1475.20,374.00 1475.20,382.00 L1475.20,404.00 Z" fill="#234862"/>
<rect x="1160.00" y="404.00" width="315.20" height="1" fill="#000" fill-opacity="0.15"/>
<circle cx="1175.00" cy="389.00" r="5" fill="#6c6c6c"/>
<text x="1190.00" y="394.00" font-size="14" fill="#999" text-anchor="start" >SegmentAnything Ultra V2</text>
<circle cx="1170.00" cy="418.00" r="4.5" fill="#64B5F6" stroke="#000" stroke-opacity="0.9" stroke-width="1"/>
<text x="1180.00" y="423.00" font-size="12" fill="#AAA" text-anchor="start" >图像</text>
<circle cx="1170.00" cy="438.00" r="4.5" fill="#77FF77" stroke="#000" stroke-opacity="0.9" stroke-width="1"/>
<text x="1180.00" y="443.00" font-size="12" fill="#AAA" text-anchor="start" >提示词</text>
<circle cx="1466.20" cy="418.00" r="4.5" fill="#64B5F6" stroke="#000" stroke-opacity="0.9" stroke-width="1"/>
<text x="1456.20" y="423.00" font-size="12" fill="#AAA" text-anchor="end" >图像</text>
<circle cx="1466.20" cy="438.00" r="4.5" fill="#81C784" stroke="#000" stroke-opacity="0.9" stroke-width="1"/>
<text x="1456.20" y="443.00" font-size="12" fill="#AAA" text-anchor="end" >遮罩</text>
<rect x="1175.00" y="450.00" width="285.20" height="20.00" rx="10" fill="#222" stroke="#666" stroke-width="1"/>
<path d="M1191.00,455.00 L1181.00,460.00 L1191.00,465.00 Z" fill="#DDD"/>
<path d="M1444.20,455.00 L1454.20,460.00 L1444.20,465.00 Z" fill="#DDD"/>
<text x="1195.00" y="464.20" font-size="12" fill="#999" text-anchor="start" >SAM模型</text>
<text x="1425.20" y="464.20" font-size="12" fill="#DDD" text-anchor="end" >sam_vit_h (2.56GB)</text>
<rect x="1175.00" y="474.00" width="285.20" height="20.00" rx="10" fill="#222" stroke="#666" stroke-width="1"/>
<path d="M1191.00,479.00 L1181.00,484.00 L1191.00,489.00 Z" fill="#DDD"/>
<path d="M1444.20,479.00 L1454.20,484.00 L1444.20,489.00 Z" fill="#DDD"/>
<text x="1195.00" y="488.20" font-size="12" fill="#999" text-anchor="start" >GroundingDINO模型</text>
<text x="1425.20" y="488.20" font-size="12" fill="#DDD" text-anchor="end" >GroundingDINO_S...</text>
<rect x="1175.00" y="498.00" width="285.20" height="20.00" rx="10" fill="#222" stroke="#666" stroke-width="1"/>
<path d="M1191.00,503.00 L1181.00,508.00 L1191.00,513.00 Z" fill="#DDD"/>
<path d="M1444.20,503.00 L1454.20,508.00 L1444.20,513.00 Z" fill="#DDD"/>
<text x="1195.00" y="512.20" font-size="12" fill="#999" text-anchor="start" >阈值</text>
<text x="1425.20" y="512.20" font-size="12" fill="#DDD" text-anchor="end" >0.30</text>
<rect x="1175.00" y="522.00" width="285.20" height="20.00" rx="10" fill="#222" stroke="#666" stroke-width="1"/>
<path d="M1191.00,527.00 L1181.00,532.00 L1191.00,537.00 Z" fill="#DDD"/>
<path d="M1444.20,527.00 L1454.20,532.00 L1444.20,537.00 Z" fill="#DDD"/>
<text x="1195.00" y="536.20" font-size="12" fill="#999" text-anchor="start" >细节处理方法</text>
<text x="1425.20" y="536.20" font-size="12" fill="#DDD" text-anchor="end" >VITMatte</text>
<rect x="1175.00" y="546.00" width="285.20" height="20.00" rx="10" fill="#222" stroke="#666" stroke-width="1"/>
<path d="M1191.00,551.00 L1181.00,556.00 L1191.00,561.00 Z" fill="#DDD"/>
<path d="M1444.20,551.00 L1454.20,556.00 L1444.20,561.00 Z" fill="#DDD"/>
<text x="1195.00" y="560.20" font-size="12" fill="#999" text-anchor="start" >细节消融</text>
<text x="1425.20" y="560.20" font-size="12" fill="#DDD" text-anchor="end" >6</text>
<rect x="1175.00" y="570.00" width="285.20" height="20.00" rx="10" fill="#222" stroke="#666" stroke-width="1"/>
<path d="M1191.00,575.00 L1181.00,580.00 L1191.00,585.00 Z" fill="#DDD"/>
<path d="M1444.20,575.00 L1454.20,580.00 L1444.20,585.00 Z" fill="#DDD"/>
<text x="1195.00" y="584.20" font-size="12" fill="#999" text-anchor="start" >细节膨胀</text>
<text x="1425.20" y="584.20" font-size="12" fill="#DDD" text-anchor="end" >6</text>
<rect x="1175.00" y="594.00" width="285.20" height="20" fill="#222"/>
<rect x="1175.00" y="594.00" width="42.78" height="20" fill="#678"/>
<rect x="1175.00" y="594.00" width="285.20" height="20" fill="none" stroke="#666" stroke-width="1"/>
<text x="1317.60" y="608.20" font-size="12" fill="#DDD" text-anchor="middle" xml:space="preserve">黑色阈值: 0.15  0.15</text>
<rect x="1175.00" y="618.00" width="285.20" height="20" fill="#222"/>
<rect x="1175.00" y="618.00" width="285.20" height="20" fill="#678"/>
<rect x="1175.00" y="618.00" width="285.20" height="20" fill="none" stroke="#666" stroke-width="1"/>
<text x="1317.60" y="632.20" font-size="12" fill="#DDD" text-anchor="middle" xml:space="preserve">白色阈值: 0.99  0.99</text>
<rect x="1175.00" y="642.00" width="285.20" height="20.00" rx="10" fill="#222" stroke="#666" stroke-width="1"/>
<text x="1190.00" y="656.20" font-size="12" fill="#999" text-anchor="start" >处理细节</text>
<text x="1435.20" y="656.20" font-size="12" fill="#DDD" text-anchor="end" >true</text>
<circle cx="1445.20" cy="652.00" r="7.2" fill="#89A"/>
<rect x="1175.00" y="666.00" width="285.20" height="20.00" rx="10" fill="#222" stroke="#666" stroke-width="1"/>
<path d="M1191.00,671.00 L1181.00,676.00 L1191.00,681.00 Z" fill="#DDD"/>
<path d="M1444.20,671.00 L1454.20,676.00 L1444.20,681.00 Z" fill="#DDD"/>
<text x="1195.00" y="680.20" font-size="12" fill="#999" text-anchor="start" >设备</text>
<text x="1425.20" y="680.20" font-size="12" fill="#DDD" text-anchor="end" >cuda</text>
<rect x="1175.00" y="690.00" width="285.20" height="20.00" rx="10" fill="#222" stroke="#666" stroke-width="1"/>
<path d="M1191.00,695.00 L1181.00,700.00 L1191.00,705.00 Z" fill="#DDD"/>
<path d="M1444.20,695.00 L1454.20,700.00 L1444.20,705.00 Z" fill="#DDD"/>
<text x="1195.00" y="704.20" font-size="12" fill="#999" text-anchor="start" >Vitmatte最大尺寸</text>
<text x="1425.20" y="704.20" font-size="12" fill="#DDD" text-anchor="end" >2.0</text>
<rect x="1175.00" y="714.00" width="285.20" height="20.00" rx="10" fill="#222" stroke="#666" stroke-width="1"/>
<text x="1190.00" y="728.20" font-size="12" fill="#999" text-anchor="start" >cache_model</text>
<text x="1435.20" y="728.20" font-size="12" fill="#999" text-anchor="end" >false</text>
<circle cx="1445.20" cy="724.00" r="7.2" fill="#333"/>
<rect x="1349.50" y="352.50" width="123.50" height="19.50" rx="5" fill="#0f1f0f" />
<text x="1411.25" y="366.80" font-size="12.5" fill="#fff" text-anchor="middle" textLength="111.5" lengthAdjust="spacingAndGlyphs">LayerStyle_Advance</text>
</g>
<g>
<rect x="1166.00" y="774.40" width="310.00" height="87.50" rx="8" fill="#665533" filter="url(#sh)"/>
<path d="M1166.00,804.40 L1166.00,782.40 Q1166.00,774.40 1174.00,774.40 L1468.00,774.40 Q1476.00,774.40 1476.00,782.40 L1476.00,804.40 Z" fill="#443322"/>
<rect x="1166.00" y="804.40" width="310.00" height="1" fill="#000" fill-opacity="0.15"/>
<circle cx="1181.00" cy="789.40" r="5" fill="#6c6c6c"/>
<text x="1196.00" y="794.40" font-size="14" fill="#999" text-anchor="start" >注释</text>
<rect x="1176" y="816.5" width="290" height="36.0" fill="#222"/>
<text x="1179" y="828.5" font-size="10" fill="#DDD" font-family="Liberation Mono, monospace" textLength="35" lengthAdjust="spacingAndGlyphs">segment</text>
<text x="1214" y="828.5" font-size="10" fill="#DDD" font-family="Liberation Mono, monospace" textLength="140" lengthAdjust="spacingAndGlyphs">中的提示词为所需要细化的部位</text>
</g>
<g>
<rect x="1184.30" y="885.00" width="210.50" height="275.00" rx="8" fill="#353535" filter="url(#sh)"/>
<path d="M1184.30,915.00 L1184.30,893.00 Q1184.30,885.00 1192.30,885.00 L1386.80,885.00 Q1394.80,885.00 1394.80,893.00 L1394.80,915.00 Z" fill="#333333"/>
<rect x="1184.30" y="915.00" width="210.50" height="1" fill="#000" fill-opacity="0.15"/>
<circle cx="1199.30" cy="900.00" r="5" fill="#6c6c6c"/>
<text x="1214.30" y="905.00" font-size="14" fill="#999" text-anchor="start" >遮罩预览</text>
<circle cx="1194.30" cy="929.00" r="4.5" fill="#81C784" stroke="#000" stroke-opacity="0.9" stroke-width="1"/>
<text x="1204.30" y="934.00" font-size="12" fill="#AAA" text-anchor="start" >遮罩</text>
<rect x="1274.00" y="863.50" width="118.00" height="19.00" rx="5" fill="#0f1f0f" />
<text x="1333.00" y="877.80" font-size="12.5" fill="#fff" text-anchor="middle" textLength="106.0" lengthAdjust="spacingAndGlyphs">comfyui_essentials</text>
</g>
<g>
<rect x="1508.30" y="349.30" width="430.00" height="223.60" rx="8" fill="#353535" filter="url(#sh)"/>
<path d="M1508.30,379.30 L1508.30,357.30 Q1508.30,349.30 1516.30,349.30 L1930.30,349.30 Q1938.30,349.30 1938.30,357.30 L1938.30,379.30 Z" fill="#333333"/>
<rect x="1508.30" y="379.30" width="430.00" height="1" fill="#000" fill-opacity="0.15"/>
<circle cx="1523.30" cy="364.30" r="5" fill="#6c6c6c"/>
<text x="1538.30" y="369.30" font-size="14" fill="#999" text-anchor="start" >局部重绘（缩放）</text>
<circle cx="1518.30" cy="393.30" r="4.5" fill="#64B5F6" stroke="#000" stroke-opacity="0.9" stroke-width="1"/>
<text x="1528.30" y="398.30" font-size="12" fill="#AAA" text-anchor="start" >图像</text>
<circle cx="1518.30" cy="413.30" r="4.5" fill="#81C784" stroke="#000" stroke-opacity="0.9" stroke-width="1"/>
<text x="1528.30" y="418.30" font-size="12" fill="#AAA" text-anchor="start" >遮罩</text>
<circle cx="1518.30" cy="433.30" r="3.3" fill="#353535" stroke="#81C784" stroke-width="2.6"/>
<text x="1528.30" y="438.30" font-size="12" fill="#AAA" text-anchor="start" >上下文遮罩(可选)</text>
<circle cx="1929.30" cy="393.30" r="4.5" fill="#64B5F6" stroke="#000" stroke-opacity="0.9" stroke-width="1"/>
<text x="1919.30" y="398.30" font-size="12" fill="#AAA" text-anchor="end" >图像</text>
<circle cx="1929.30" cy="413.30" r="4.5" fill="#81C784" stroke="#000" stroke-opacity="0.9" stroke-width="1"/>
<text x="1919.30" y="418.30" font-size="12" fill="#AAA" text-anchor="end" >遮罩</text>
<circle cx="1929.30" cy="433.30" r="4.5" fill="#81C784" stroke="#000" stroke-opacity="0.9" stroke-width="1"/>
<text x="1919.30" y="438.30" font-size="12" fill="#AAA" text-anchor="end" >上下文遮罩</text>
<rect x="1523.30" y="445.30" width="400.00" height="20.00" rx="10" fill="#222" stroke="#666" stroke-width="1"/>
<path d="M1539.30,450.30 L1529.30,455.30 L1539.30,460.30 Z" fill="#DDD"/>
<path d="M1907.30,450.30 L1917.30,455.30 L1907.30,460.30 Z" fill="#DDD"/>
<text x="1543.30" y="459.50" font-size="12" fill="#999" text-anchor="start" >缩放算法</text>
<text x="1888.30" y="459.50" font-size="12" fill="#DDD" text-anchor="end" >bicubic</text>
<rect x="1523.30" y="469.30" width="400.00" height="20.00" rx="10" fill="#222" stroke="#666" stroke-width="1"/>
<path d="M1539.30,474.30 L1529.30,479.30 L1539.30,484.30 Z" fill="#DDD"/>
<path d="M1907.30,474.30 L1917.30,479.30 L1907.30,484.30 Z" fill="#DDD"/>
<text x="1543.30" y="483.50" font-size="12" fill="#999" text-anchor="start" >模式</text>
<text x="1888.30" y="483.50" font-size="12" fill="#DDD" text-anchor="end" >ensure minimum size</text>
<rect x="1523.30" y="493.30" width="400.00" height="20.00" rx="10" fill="#222" stroke="#666" stroke-width="1"/>
<path d="M1539.30,498.30 L1529.30,503.30 L1539.30,508.30 Z" fill="#DDD"/>
<path d="M1907.30,498.30 L1917.30,503.30 L1907.30,508.30 Z" fill="#DDD"/>
<text x="1543.30" y="507.50" font-size="12" fill="#999" text-anchor="start" >最小宽度</text>
<text x="1888.30" y="507.50" font-size="12" fill="#DDD" text-anchor="end" >1024</text>
<rect x="1523.30" y="517.30" width="400.00" height="20.00" rx="10" fill="#222" stroke="#666" stroke-width="1"/>
<path d="M1539.30,522.30 L1529.30,527.30 L1539.30,532.30 Z" fill="#DDD"/>
<path d="M1907.30,522.30 L1917.30,527.30 L1907.30,532.30 Z" fill="#DDD"/>
<text x="1543.30" y="531.50" font-size="12" fill="#999" text-anchor="start" >最小高度</text>
<text x="1888.30" y="531.50" font-size="12" fill="#DDD" text-anchor="end" >1024</text>
<rect x="1523.30" y="541.30" width="400.00" height="20.00" rx="10" fill="#222" stroke="#666" stroke-width="1"/>
<path d="M1539.30,546.30 L1529.30,551.30 L1539.30,556.30 Z" fill="#DDD"/>
<path d="M1907.30,546.30 L1917.30,551.30 L1907.30,556.30 Z" fill="#DDD"/>
<text x="1543.30" y="555.50" font-size="12" fill="#999" text-anchor="start" >缩放系数</text>
<text x="1888.30" y="555.50" font-size="12" fill="#DDD" text-anchor="end" >1.00</text>
<rect x="1750.50" y="328.00" width="185.50" height="19.00" rx="5" fill="#0f1f0f" />
<text x="1843.25" y="342.30" font-size="12.5" fill="#fff" text-anchor="middle" textLength="173.5" lengthAdjust="spacingAndGlyphs">comfyui-inpaint-cropandstitch</text>
</g>
<g>
<rect x="1520.40" y="610.60" width="314.50" height="275.00" rx="8" fill="#353535" filter="url(#sh)"/>
<path d="M1520.40,640.60 L1520.40,618.60 Q1520.40,610.60 1528.40,610.60 L1826.90,610.60 Q1834.90,610.60 1834.90,618.60 L1834.90,640.60 Z" fill="#333333"/>
<rect x="1520.40" y="640.60" width="314.50" height="1" fill="#000" fill-opacity="0.15"/>
<circle cx="1535.40" cy="625.60" r="5" fill="#6c6c6c"/>
<text x="1550.40" y="630.60" font-size="14" fill="#999" text-anchor="start" >遮罩模糊生长</text>
<circle cx="1530.40" cy="654.60" r="4.5" fill="#81C784" stroke="#000" stroke-opacity="0.9" stroke-width="1"/>
<text x="1540.40" y="659.60" font-size="12" fill="#AAA" text-anchor="start" >遮罩</text>
<circle cx="1825.90" cy="654.60" r="4.5" fill="#81C784" stroke="#000" stroke-opacity="0.9" stroke-width="1"/>
<text x="1815.90" y="659.60" font-size="12" fill="#AAA" text-anchor="end" >遮罩</text>
<circle cx="1825.90" cy="674.60" r="4.5" fill="#81C784" stroke="#000" stroke-opacity="0.9" stroke-width="1"/>
<text x="1815.90" y="679.60" font-size="12" fill="#AAA" text-anchor="end" >反转遮罩</text>
<rect x="1535.40" y="686.60" width="284.50" height="20.00" rx="10" fill="#222" stroke="#666" stroke-width="1"/>
<path d="M1551.40,691.60 L1541.40,696.60 L1551.40,701.60 Z" fill="#DDD"/>
<path d="M1803.90,691.60 L1813.90,696.60 L1803.90,701.60 Z" fill="#DDD"/>
<text x="1555.40" y="700.80" font-size="12" fill="#999" text-anchor="start" >扩展</text>
<text x="1784.90" y="700.80" font-size="12" fill="#DDD" text-anchor="end" >0</text>
<rect x="1535.40" y="710.60" width="284.50" height="20.00" rx="10" fill="#222" stroke="#666" stroke-width="1"/>
<path d="M1551.40,715.60 L1541.40,720.60 L1551.40,725.60 Z" fill="#DDD"/>
<path d="M1803.90,715.60 L1813.90,720.60 L1803.90,725.60 Z" fill="#DDD"/>
<text x="1555.40" y="724.80" font-size="12" fill="#999" text-anchor="start" >扩展增量</text>
<text x="1784.90" y="724.80" font-size="12" fill="#DDD" text-anchor="end" >0.0</text>
<rect x="1535.40" y="734.60" width="284.50" height="20.00" rx="10" fill="#222" stroke="#666" stroke-width="1"/>
<text x="1550.40" y="748.80" font-size="12" fill="#999" text-anchor="start" >倒角</text>
<text x="1794.90" y="748.80" font-size="12" fill="#DDD" text-anchor="end" >true</text>
<circle cx="1804.90" cy="744.60" r="7.2" fill="#89A"/>
<rect x="1535.40" y="758.60" width="284.50" height="20.00" rx="10" fill="#222" stroke="#666" stroke-width="1"/>
<text x="1550.40" y="772.80" font-size="12" fill="#999" text-anchor="start" >反转输入</text>
<text x="1794.90" y="772.80" font-size="12" fill="#999" text-anchor="end" >false</text>
<circle cx="1804.90" cy="768.60" r="7.2" fill="#333"/>
<rect x="1535.40" y="782.60" width="284.50" height="20.00" rx="10" fill="#222" stroke="#666" stroke-width="1"/>
<path d="M1551.40,787.60 L1541.40,792.60 L1551.40,797.60 Z" fill="#DDD"/>
<path d="M1803.90,787.60 L1813.90,792.60 L1803.90,797.60 Z" fill="#DDD"/>
<text x="1555.40" y="796.80" font-size="12" fill="#999" text-anchor="start" >模糊半径</text>
<text x="1784.90" y="796.80" font-size="12" fill="#DDD" text-anchor="end" >0.0</text>
<rect x="1535.40" y="806.60" width="284.50" height="20.00" rx="10" fill="#222" stroke="#666" stroke-width="1"/>
<path d="M1551.40,811.60 L1541.40,816.60 L1551.40,821.60 Z" fill="#DDD"/>
<path d="M1803.90,811.60 L1813.90,816.60 L1803.90,821.60 Z" fill="#DDD"/>
<text x="1555.40" y="820.80" font-size="12" fill="#999" text-anchor="start" >线性透明</text>
<text x="1784.90" y="820.80" font-size="12" fill="#DDD" text-anchor="end" >1.00</text>
<rect x="1535.40" y="830.60" width="284.50" height="20.00" rx="10" fill="#222" stroke="#666" stroke-width="1"/>
<path d="M1551.40,835.60 L1541.40,840.60 L1551.40,845.60 Z" fill="#DDD"/>
<path d="M1803.90,835.60 L1813.90,840.60 L1803.90,845.60 Z" fill="#DDD"/>
<text x="1555.40" y="844.80" font-size="12" fill="#999" text-anchor="start" >腐蚀系数</text>
<text x="1784.90" y="844.80" font-size="12" fill="#DDD" text-anchor="end" >1.00</text>
<rect x="1535.40" y="854.60" width="284.50" height="20.00" rx="10" fill="#222" stroke="#666" stroke-width="1"/>
<text x="1550.40" y="868.80" font-size="12" fill="#999" text-anchor="start" >fill_holes</text>
<text x="1794.90" y="868.80" font-size="12" fill="#999" text-anchor="end" >false</text>
<circle cx="1804.90" cy="864.60" r="7.2" fill="#333"/>
<text x="1819.90" y="631.60" font-size="16" fill="#f9a31b" text-anchor="middle" font-weight="bold">?</text>
<rect x="1719.00" y="589.50" width="114.00" height="18.50" rx="5" fill="#0f1f0f" />
<text x="1776.00" y="603.80" font-size="12.5" fill="#fff" text-anchor="middle" textLength="102.0" lengthAdjust="spacingAndGlyphs">comfyui-KJNodes</text>
</g>
<g>
<rect x="1686.30" y="929.90" width="210.20" height="275.60" rx="8" fill="#353535" filter="url(#sh)"/>
<path d="M1686.30,959.90 L1686.30,937.90 Q1686.30,929.90 1694.30,929.90 L1888.50,929.90 Q1896.50,929.90 1896.50,937.90 L1896.50,959.90 Z" fill="#333333"/>
<rect x="1686.30" y="959.90" width="210.20" height="1" fill="#000" fill-opacity="0.15"/>
<circle cx="1701.30" cy="944.90" r="5" fill="#6c6c6c"/>
<text x="1716.30" y="949.90" font-size="14" fill="#999" text-anchor="start" >遮罩预览</text>
<circle cx="1696.30" cy="973.90" r="4.5" fill="#81C784" stroke="#000" stroke-opacity="0.9" stroke-width="1"/>
<text x="1706.30" y="978.90" font-size="12" fill="#AAA" text-anchor="start" >遮罩</text>
<rect x="1776.00" y="908.00" width="118.00" height="19.50" rx="5" fill="#0f1f0f" />
<text x="1835.00" y="922.30" font-size="12.5" fill="#fff" text-anchor="middle" textLength="106.0" lengthAdjust="spacingAndGlyphs">comfyui_essentials</text>
</g>
<g>
<rect x="2012.30" y="199.50" width="315.00" height="87.20" rx="8" fill="#353535" filter="url(#sh)"/>
<path d="M2012.30,229.50 L2012.30,207.50 Q2012.30,199.50 2020.30,199.50 L2319.30,199.50 Q2327.30,199.50 2327.30,207.50 L2327.30,229.50 Z" fill="#333333"/>
<rect x="2012.30" y="229.50" width="315.00" height="1" fill="#000" fill-opacity="0.15"/>
<circle cx="2027.30" cy="214.50" r="5" fill="#6c6c6c"/>
<text x="2042.30" y="219.50" font-size="14" fill="#999" text-anchor="start" >VAE加载器</text>
<circle cx="2318.30" cy="243.50" r="4.5" fill="#FF6E6E" stroke="#000" stroke-opacity="0.9" stroke-width="1"/>
<text x="2308.30" y="248.50" font-size="12" fill="#AAA" text-anchor="end" >VAE</text>
<rect x="2027.30" y="255.50" width="285.00" height="20.00" rx="10" fill="#222" stroke="#666" stroke-width="1"/>
<path d="M2043.30,260.50 L2033.30,265.50 L2043.30,270.50 Z" fill="#DDD"/>
<path d="M2296.30,260.50 L2306.30,265.50 L2296.30,270.50 Z" fill="#DDD"/>
<text x="2047.30" y="269.70" font-size="12" fill="#999" text-anchor="start" >vae名称</text>
<text x="2277.30" y="269.70" font-size="12" fill="#DDD" text-anchor="end" >ae.sft</text>
</g>
<g>
<rect x="1990.60" y="348.30" width="443.20" height="415.00" rx="8" fill="#353535" filter="url(#sh)"/>
<path d="M1990.60,378.30 L1990.60,356.30 Q1990.60,348.30 1998.60,348.30 L2425.80,348.30 Q2433.80,348.30 2433.80,356.30 L2433.80,378.30 Z" fill="#333333"/>
<rect x="1990.60" y="378.30" width="443.20" height="1" fill="#000" fill-opacity="0.15"/>
<circle cx="2005.60" cy="363.30" r="5" fill="#6c6c6c"/>
<text x="2020.60" y="368.30" font-size="14" fill="#999" text-anchor="start" >局部重绘（裁剪）</text>
<circle cx="2000.60" cy="392.30" r="4.5" fill="#64B5F6" stroke="#000" stroke-opacity="0.9" stroke-width="1"/>
<text x="2010.60" y="397.30" font-size="12" fill="#AAA" text-anchor="start" >图像</text>
<circle cx="2000.60" cy="412.30" r="4.5" fill="#81C784" stroke="#000" stroke-opacity="0.9" stroke-width="1"/>
<text x="2010.60" y="417.30" font-size="12" fill="#AAA" text-anchor="start" >遮罩</text>
<circle cx="2000.60" cy="432.30" r="3.3" fill="#353535" stroke="#81C784" stroke-width="2.6"/>
<text x="2010.60" y="437.30" font-size="12" fill="#AAA" text-anchor="start" >上下文遮罩(可选)</text>
<circle cx="2424.80" cy="392.30" r="4.5" fill="#778899" stroke="#000" stroke-opacity="0.9" stroke-width="1"/>
<text x="2414.80" y="397.30" font-size="12" fill="#AAA" text-anchor="end" >接缝</text>
<circle cx="2424.80" cy="412.30" r="4.5" fill="#64B5F6" stroke="#000" stroke-opacity="0.9" stroke-width="1"/>
<text x="2414.80" y="417.30" font-size="12" fill="#AAA" text-anchor="end" >cropped_image</text>
<circle cx="2424.80" cy="432.30" r="4.5" fill="#81C784" stroke="#000" stroke-opacity="0.9" stroke-width="1"/>
<text x="2414.80" y="437.30" font-size="12" fill="#AAA" text-anchor="end" >cropped_mask</text>
<rect x="2005.60" y="444.30" width="413.20" height="20.00" rx="10" fill="#222" stroke="#666" stroke-width="1"/>
<path d="M2021.60,449.30 L2011.60,454.30 L2021.60,459.30 Z" fill="#DDD"/>
<path d="M2402.80,449.30 L2412.80,454.30 L2402.80,459.30 Z" fill="#DDD"/>
<text x="2025.60" y="458.50" font-size="12" fill="#999" text-anchor="start" >上下文像素扩展</text>
<text x="2383.80" y="458.50" font-size="12" fill="#DDD" text-anchor="end" >20</text>
<rect x="2005.60" y="468.30" width="413.20" height="20.00" rx="10" fill="#222" stroke="#666" stroke-width="1"/>
<path d="M2021.60,473.30 L2011.60,478.30 L2021.60,483.30 Z" fill="#DDD"/>
<path d="M2402.80,473.30 L2412.80,478.30 L2402.80,483.30 Z" fill="#DDD"/>
<text x="2025.60" y="482.50" font-size="12" fill="#999" text-anchor="start" >上下文系数扩展</text>
<text x="2383.80" y="482.50" font-size="12" fill="#DDD" text-anchor="end" >1.00</text>
<rect x="2005.60" y="492.30" width="413.20" height="20.00" rx="10" fill="#222" stroke="#666" stroke-width="1"/>
<text x="2020.60" y="506.50" font-size="12" fill="#999" text-anchor="start" >填充遮罩缺口</text>
<text x="2393.80" y="506.50" font-size="12" fill="#DDD" text-anchor="end" >true</text>
<circle cx="2403.80" cy="502.30" r="7.2" fill="#89A"/>
<rect x="2005.60" y="516.30" width="413.20" height="20.00" rx="10" fill="#222" stroke="#666" stroke-width="1"/>
<path d="M2021.60,521.30 L2011.60,526.30 L2021.60,531.30 Z" fill="#DDD"/>
<path d="M2402.80,521.30 L2412.80,526.30 L2402.80,531.30 Z" fill="#DDD"/>
<text x="2025.60" y="530.50" font-size="12" fill="#999" text-anchor="start" >遮罩模糊</text>
<text x="2383.80" y="530.50" font-size="12" fill="#DDD" text-anchor="end" >16.0</text>
<rect x="2005.60" y="540.30" width="413.20" height="20.00" rx="10" fill="#222" stroke="#666" stroke-width="1"/>
<text x="2020.60" y="554.50" font-size="12" fill="#999" text-anchor="start" >遮罩反转</text>
<text x="2393.80" y="554.50" font-size="12" fill="#999" text-anchor="end" >false</text>
<circle cx="2403.80" cy="550.30" r="7.2" fill="#333"/>
<rect x="2005.60" y="564.30" width="413.20" height="20.00" rx="10" fill="#222" stroke="#666" stroke-width="1"/>
<path d="M2021.60,569.30 L2011.60,574.30 L2021.60,579.30 Z" fill="#DDD"/>
<path d="M2402.80,569.30 L2412.80,574.30 L2402.80,579.30 Z" fill="#DDD"/>
<text x="2025.60" y="578.50" font-size="12" fill="#999" text-anchor="start" >混合图像</text>
<text x="2383.80" y="578.50" font-size="12" fill="#DDD" text-anchor="end" >16.0</text>
<rect x="2005.60" y="588.30" width="413.20" height="20.00" rx="10" fill="#222" stroke="#666" stroke-width="1"/>
<path d="M2021.60,593.30 L2011.60,598.30 L2021.60,603.30 Z" fill="#DDD"/>
<path d="M2402.80,593.30 L2412.80,598.30 L2402.80,603.30 Z" fill="#DDD"/>
<text x="2025.60" y="602.50" font-size="12" fill="#999" text-anchor="start" >缩放算法</text>
<text x="2383.80" y="602.50" font-size="12" fill="#DDD" text-anchor="end" >bicubic</text>
<rect x="2005.60" y="612.30" width="413.20" height="20.00" rx="10" fill="#222" stroke="#666" stroke-width="1"/>
<path d="M2021.60,617.30 L2011.60,622.30 L2021.60,627.30 Z" fill="#DDD"/>
<path d="M2402.80,617.30 L2412.80,622.30 L2402.80,627.30 Z" fill="#DDD"/>
<text x="2025.60" y="626.50" font-size="12" fill="#999" text-anchor="start" >模式</text>
<text x="2383.80" y="626.50" font-size="12" fill="#DDD" text-anchor="end" >ranged size</text>
<rect x="2005.60" y="636.30" width="413.20" height="20.00" rx="10" fill="#222" stroke="#666" stroke-width="1"/>
<path d="M2021.60,641.30 L2011.60,646.30 L2021.60,651.30 Z" fill="#DDD"/>
<path d="M2402.80,641.30 L2412.80,646.30 L2402.80,651.30 Z" fill="#DDD"/>
<text x="2025.60" y="650.50" font-size="12" fill="#999" text-anchor="start" >最小宽度</text>
<text x="2383.80" y="650.50" font-size="12" fill="#DDD" text-anchor="end" >512</text>
<rect x="2005.60" y="660.30" width="413.20" height="20.00" rx="10" fill="#222" stroke="#666" stroke-width="1"/>
<path d="M2021.60,665.30 L2011.60,670.30 L2021.60,675.30 Z" fill="#DDD"/>
<path d="M2402.80,665.30 L2412.80,670.30 L2402.80,675.30 Z" fill="#DDD"/>
<text x="2025.60" y="674.50" font-size="12" fill="#999" text-anchor="start" >最小高度</text>
<text x="2383.80" y="674.50" font-size="12" fill="#DDD" text-anchor="end" >512</text>
<rect x="2005.60" y="684.30" width="413.20" height="20.00" rx="10" fill="#222" stroke="#666" stroke-width="1"/>
<path d="M2021.60,689.30 L2011.60,694.30 L2021.60,699.30 Z" fill="#DDD"/>
<path d="M2402.80,689.30 L2412.80,694.30 L2402.80,699.30 Z" fill="#DDD"/>
<text x="2025.60" y="698.50" font-size="12" fill="#999" text-anchor="start" >最大宽度</text>
<text x="2383.80" y="698.50" font-size="12" fill="#DDD" text-anchor="end" >768</text>
<rect x="2005.60" y="708.30" width="413.20" height="20.00" rx="10" fill="#222" stroke="#666" stroke-width="1"/>
<path d="M2021.60,713.30 L2011.60,718.30 L2021.60,723.30 Z" fill="#DDD"/>
<path d="M2402.80,713.30 L2412.80,718.30 L2402.80,723.30 Z" fill="#DDD"/>
<text x="2025.60" y="722.50" font-size="12" fill="#999" text-anchor="start" >最大高度</text>
<text x="2383.80" y="722.50" font-size="12" fill="#DDD" text-anchor="end" >768</text>
<rect x="2005.60" y="732.30" width="413.20" height="20.00" rx="10" fill="#222" stroke="#666" stroke-width="1"/>
<path d="M2021.60,737.30 L2011.60,742.30 L2021.60,747.30 Z" fill="#DDD"/>
<path d="M2402.80,737.30 L2412.80,742.30 L2402.80,747.30 Z" fill="#DDD"/>
<text x="2025.60" y="746.50" font-size="12" fill="#999" text-anchor="start" >分区</text>
<text x="2383.80" y="746.50" font-size="12" fill="#DDD" text-anchor="end" >32</text>
<rect x="2246.00" y="326.50" width="185.00" height="19.50" rx="5" fill="#0f1f0f" />
<text x="2338.50" y="340.80" font-size="12.5" fill="#fff" text-anchor="middle" textLength="173.0" lengthAdjust="spacingAndGlyphs">comfyui-inpaint-cropandstitch</text>
</g>
<g>
<rect x="2115.70" y="786.90" width="315.00" height="182.60" rx="8" fill="#353535" filter="url(#sh)"/>
<path d="M2115.70,816.90 L2115.70,794.90 Q2115.70,786.90 2123.70,786.90 L2422.70,786.90 Q2430.70,786.90 2430.70,794.90 L2430.70,816.90 Z" fill="#333333"/>
<rect x="2115.70" y="816.90" width="315.00" height="1" fill="#000" fill-opacity="0.15"/>
<circle cx="2130.70" cy="801.90" r="5" fill="#6c6c6c"/>
<text x="2145.70" y="806.90" font-size="14" fill="#999" text-anchor="start" >遮罩到Seg</text>
<circle cx="2125.70" cy="830.90" r="4.5" fill="#81C784" stroke="#000" stroke-opacity="0.9" stroke-width="1"/>
<text x="2135.70" y="835.90" font-size="12" fill="#AAA" text-anchor="start" >遮罩</text>
<circle cx="2421.70" cy="830.90" r="4.5" fill="#77FF77" stroke="#000" stroke-opacity="0.9" stroke-width="1"/>
<text x="2411.70" y="835.90" font-size="12" fill="#AAA" text-anchor="end" >Seg</text>
<rect x="2130.70" y="842.90" width="285.00" height="20.00" rx="10" fill="#222" stroke="#666" stroke-width="1"/>
<text x="2145.70" y="857.10" font-size="12" fill="#999" text-anchor="start" >是否合并</text>
<text x="2390.70" y="857.10" font-size="12" fill="#999" text-anchor="end" >False</text>
<circle cx="2400.70" cy="852.90" r="7.2" fill="#333"/>
<rect x="2130.70" y="866.90" width="285.00" height="20.00" rx="10" fill="#222" stroke="#666" stroke-width="1"/>
<path d="M2146.70,871.90 L2136.70,876.90 L2146.70,881.90 Z" fill="#DDD"/>
<path d="M2399.70,871.90 L2409.70,876.90 L2399.70,881.90 Z" fill="#DDD"/>
<text x="2150.70" y="881.10" font-size="12" fill="#999" text-anchor="start" >裁剪系数</text>
<text x="2380.70" y="881.10" font-size="12" fill="#DDD" text-anchor="end" >3.0</text>
<rect x="2130.70" y="890.90" width="285.00" height="20.00" rx="10" fill="#222" stroke="#666" stroke-width="1"/>
<text x="2145.70" y="905.10" font-size="12" fill="#999" text-anchor="start" >填充BBox</text>
<text x="2390.70" y="905.10" font-size="12" fill="#999" text-anchor="end" >disabled</text>
<circle cx="2400.70" cy="900.90" r="7.2" fill="#333"/>
<rect x="2130.70" y="914.90" width="285.00" height="20.00" rx="10" fill="#222" stroke="#666" stroke-width="1"/>
<path d="M2146.70,919.90 L2136.70,924.90 L2146.70,929.90 Z" fill="#DDD"/>
<path d="M2399.70,919.90 L2409.70,924.90 L2399.70,929.90 Z" fill="#DDD"/>
<text x="2150.70" y="929.10" font-size="12" fill="#999" text-anchor="start" >最小尺寸</text>
<text x="2380.70" y="929.10" font-size="12" fill="#DDD" text-anchor="end" >10</text>
<rect x="2130.70" y="938.90" width="285.00" height="20.00" rx="10" fill="#222" stroke="#666" stroke-width="1"/>
<text x="2145.70" y="953.10" font-size="12" fill="#999" text-anchor="start" >contour_fill</text>
<text x="2390.70" y="953.10" font-size="12" fill="#999" text-anchor="end" >disabled</text>
<circle cx="2400.70" cy="948.90" r="7.2" fill="#333"/>
<rect x="2347.00" y="765.50" width="81.00" height="19.50" rx="5" fill="#0f1f0f" />
<text x="2387.50" y="779.80" font-size="12.5" fill="#fff" text-anchor="middle" textLength="69.0" lengthAdjust="spacingAndGlyphs">Impact-Pack</text>
</g>
<g>
<rect x="2504.00" y="347.40" width="400.30" height="702.20" rx="8" fill="#353535" filter="url(#sh)"/>
<path d="M2504.00,377.40 L2504.00,355.40 Q2504.00,347.40 2512.00,347.40 L2896.30,347.40 Q2904.30,347.40 2904.30,355.40 L2904.30,377.40 Z" fill="#333333"/>
<rect x="2504.00" y="377.40" width="400.30" height="1" fill="#000" fill-opacity="0.15"/>
<circle cx="2519.00" cy="362.40" r="5" fill="#6c6c6c"/>
<text x="2534.00" y="367.40" font-size="14" fill="#999" text-anchor="start" >局部细化</text>
<circle cx="2514.00" cy="391.40" r="4.5" fill="#64B5F6" stroke="#000" stroke-opacity="0.9" stroke-width="1"/>
<text x="2524.00" y="396.40" font-size="12" fill="#AAA" text-anchor="start" >图像</text>
<circle cx="2514.00" cy="411.40" r="4.5" fill="#77FF77" stroke="#000" stroke-opacity="0.9" stroke-width="1"/>
<text x="2524.00" y="416.40" font-size="12" fill="#AAA" text-anchor="start" >Seg</text>
<circle cx="2514.00" cy="431.40" r="4.5" fill="#B39DDB" stroke="#000" stroke-opacity="0.9" stroke-width="1"/>
<text x="2524.00" y="436.40" font-size="12" fill="#AAA" text-anchor="start" >模型</text>
<circle cx="2514.00" cy="451.40" r="4.5" fill="#FFD500" stroke="#000" stroke-opacity="0.9" stroke-width="1"/>
<text x="2524.00" y="456.40" font-size="12" fill="#AAA" text-anchor="start" >CLIP</text>
<circle cx="2514.00" cy="471.40" r="4.5" fill="#FF6E6E" stroke="#000" stroke-opacity="0.9" stroke-width="1"/>
<text x="2524.00" y="476.40" font-size="12" fill="#AAA" text-anchor="start" >VAE</text>
<circle cx="2514.00" cy="491.40" r="4.5" fill="#FFA931" stroke="#000" stroke-opacity="0.9" stroke-width="1"/>
<text x="2524.00" y="496.40" font-size="12" fill="#AAA" text-anchor="start" >正面条件</text>
<circle cx="2514.00" cy="511.40" r="4.5" fill="#FFA931" stroke="#000" stroke-opacity="0.9" stroke-width="1"/>
<text x="2524.00" y="516.40" font-size="12" fill="#AAA" text-anchor="start" >负面条件</text>
<circle cx="2514.00" cy="531.40" r="3.3" fill="#353535" stroke="#778899" stroke-width="2.6"/>
<text x="2524.00" y="536.40" font-size="12" fill="#AAA" text-anchor="start" >细化约束</text>
<circle cx="2514.00" cy="551.40" r="3.3" fill="#353535" stroke="#778899" stroke-width="2.6"/>
<text x="2524.00" y="556.40" font-size="12" fill="#AAA" text-anchor="start" >scheduler_func_opt</text>
<circle cx="2895.30" cy="391.40" r="4.5" fill="#64B5F6" stroke="#000" stroke-opacity="0.9" stroke-width="1"/>
<text x="2885.30" y="396.40" font-size="12" fill="#AAA" text-anchor="end" >图像</text>
<rect x="2519.00" y="563.40" width="370.30" height="20.00" rx="10" fill="#222" stroke="#666" stroke-width="1"/>
<path d="M2535.00,568.40 L2525.00,573.40 L2535.00,578.40 Z" fill="#DDD"/>
<path d="M2873.30,568.40 L2883.30,573.40 L2873.30,578.40 Z" fill="#DDD"/>
<text x="2539.00" y="577.60" font-size="12" fill="#999" text-anchor="start" >引导大小</text>
<text x="2854.30" y="577.60" font-size="12" fill="#DDD" text-anchor="end" >512</text>
<rect x="2519.00" y="587.40" width="370.30" height="20.00" rx="10" fill="#222" stroke="#666" stroke-width="1"/>
<text x="2534.00" y="601.60" font-size="12" fill="#999" text-anchor="start" >引导目标</text>
<text x="2864.30" y="601.60" font-size="12" fill="#DDD" text-anchor="end" >bbox</text>
<circle cx="2874.30" cy="597.40" r="7.2" fill="#89A"/>
<rect x="2519.00" y="611.40" width="370.30" height="20.00" rx="10" fill="#222" stroke="#666" stroke-width="1"/>
<path d="M2535.00,616.40 L2525.00,621.40 L2535.00,626.40 Z" fill="#DDD"/>
<path d="M2873.30,616.40 L2883.30,621.40 L2873.30,626.40 Z" fill="#DDD"/>
<text x="2539.00" y="625.60" font-size="12" fill="#999" text-anchor="start" >最大尺寸</text>
<text x="2854.30" y="625.60" font-size="12" fill="#DDD" text-anchor="end" >1024</text>
<rect x="2519.00" y="635.40" width="370.30" height="20.00" rx="10" fill="#222" stroke="#666" stroke-width="1"/>
<path d="M2535.00,640.40 L2525.00,645.40 L2535.00,650.40 Z" fill="#DDD"/>
<path d="M2873.30,640.40 L2883.30,645.40 L2873.30,650.40 Z" fill="#DDD"/>
<text x="2539.00" y="649.60" font-size="12" fill="#999" text-anchor="start" >随机种</text>
<text x="2854.30" y="649.60" font-size="12" fill="#DDD" text-anchor="end" >755023904143254</text>
<rect x="2519.00" y="659.40" width="370.30" height="20.00" rx="10" fill="#222" stroke="#666" stroke-width="1"/>
<path d="M2535.00,664.40 L2525.00,669.40 L2535.00,674.40 Z" fill="#DDD"/>
<path d="M2873.30,664.40 L2883.30,669.40 L2873.30,674.40 Z" fill="#DDD"/>
<text x="2539.00" y="673.60" font-size="12" fill="#999" text-anchor="start" >运行后操作</text>
<text x="2854.30" y="673.60" font-size="12" fill="#DDD" text-anchor="end" >randomize</text>
<rect x="2519.00" y="683.40" width="370.30" height="20.00" rx="10" fill="#222" stroke="#666" stroke-width="1"/>
<path d="M2535.00,688.40 L2525.00,693.40 L2535.00,698.40 Z" fill="#DDD"/>
<path d="M2873.30,688.40 L2883.30,693.40 L2873.30,698.40 Z" fill="#DDD"/>
<text x="2539.00" y="697.60" font-size="12" fill="#999" text-anchor="start" >步数</text>
<text x="2854.30" y="697.60" font-size="12" fill="#DDD" text-anchor="end" >8</text>
<rect x="2519.00" y="707.40" width="370.30" height="20.00" rx="10" fill="#222" stroke="#666" stroke-width="1"/>
<path d="M2535.00,712.40 L2525.00,717.40 L2535.00,722.40 Z" fill="#DDD"/>
<path d="M2873.30,712.40 L2883.30,717.40 L2873.30,722.40 Z" fill="#DDD"/>
<text x="2539.00" y="721.60" font-size="12" fill="#999" text-anchor="start" >CFG</text>
<text x="2854.30" y="721.60" font-size="12" fill="#DDD" text-anchor="end" >3.5</text>
<rect x="2519.00" y="731.40" width="370.30" height="20.00" rx="10" fill="#222" stroke="#666" stroke-width="1"/>
<path d="M2535.00,736.40 L2525.00,741.40 L2535.00,746.40 Z" fill="#DDD"/>
<path d="M2873.30,736.40 L2883.30,741.40 L2873.30,746.40 Z" fill="#DDD"/>
<text x="2539.00" y="745.60" font-size="12" fill="#999" text-anchor="start" >采样器</text>
<text x="2854.30" y="745.60" font-size="12" fill="#DDD" text-anchor="end" >euler</text>
<rect x="2519.00" y="755.40" width="370.30" height="20.00" rx="10" fill="#222" stroke="#666" stroke-width="1"/>
<path d="M2535.00,760.40 L2525.00,765.40 L2535.00,770.40 Z" fill="#DDD"/>
<path d="M2873.30,760.40 L2883.30,765.40 L2873.30,770.40 Z" fill="#DDD"/>
<text x="2539.00" y="769.60" font-size="12" fill="#999" text-anchor="start" >调度器</text>
<text x="2854.30" y="769.60" font-size="12" fill="#DDD" text-anchor="end" >simple</text>
<rect x="2519.00" y="779.40" width="370.30" height="20.00" rx="10" fill="#222" stroke="#666" stroke-width="1"/>
<path d="M2535.00,784.40 L2525.00,789.40 L2535.00,794.40 Z" fill="#DDD"/>
<path d="M2873.30,784.40 L2883.30,789.40 L2873.30,794.40 Z" fill="#DDD"/>
<text x="2539.00" y="793.60" font-size="12" fill="#999" text-anchor="start" >降噪</text>
<text x="2854.30" y="793.60" font-size="12" fill="#DDD" text-anchor="end" >0.50</text>
<rect x="2519.00" y="803.40" width="370.30" height="20.00" rx="10" fill="#222" stroke="#666" stroke-width="1"/>
<path d="M2535.00,808.40 L2525.00,813.40 L2535.00,818.40 Z" fill="#DDD"/>
<path d="M2873.30,808.40 L2883.30,813.40 L2873.30,818.40 Z" fill="#DDD"/>
<text x="2539.00" y="817.60" font-size="12" fill="#999" text-anchor="start" >羽化</text>
<text x="2854.30" y="817.60" font-size="12" fill="#DDD" text-anchor="end" >5</text>
<rect x="2519.00" y="827.40" width="370.30" height="20.00" rx="10" fill="#222" stroke="#666" stroke-width="1"/>
<text x="2534.00" y="841.60" font-size="12" fill="#999" text-anchor="start" >仅生成遮罩</text>
<text x="2864.30" y="841.60" font-size="12" fill="#DDD" text-anchor="end" >enabled</text>
<circle cx="2874.30" cy="837.40" r="7.2" fill="#89A"/>
<rect x="2519.00" y="851.40" width="370.30" height="20.00" rx="10" fill="#222" stroke="#666" stroke-width="1"/>
<text x="2534.00" y="865.60" font-size="12" fill="#999" text-anchor="start" >强制重绘</text>
<text x="2864.30" y="865.60" font-size="12" fill="#DDD" text-anchor="end" >enabled</text>
<circle cx="2874.30" cy="861.40" r="7.2" fill="#89A"/>
<rect x="2519.00" y="929.90" width="370.30" height="20.00" rx="10" fill="#222" stroke="#666" stroke-width="1"/>
<path d="M2535.00,934.90 L2525.00,939.90 L2535.00,944.90 Z" fill="#DDD"/>
<path d="M2873.30,934.90 L2883.30,939.90 L2873.30,944.90 Z" fill="#DDD"/>
<text x="2539.00" y="944.10" font-size="12" fill="#999" text-anchor="start" >cycle</text>
<text x="2854.30" y="944.10" font-size="12" fill="#DDD" text-anchor="end" >1</text>
<rect x="2519.00" y="953.90" width="370.30" height="20.00" rx="10" fill="#222" stroke="#666" stroke-width="1"/>
<text x="2534.00" y="968.10" font-size="12" fill="#999" text-anchor="start" >inpaint_model</text>
<text x="2864.30" y="968.10" font-size="12" fill="#999" text-anchor="end" >disabled</text>
<circle cx="2874.30" cy="963.90" r="7.2" fill="#333"/>
<rect x="2519.00" y="977.90" width="370.30" height="20.00" rx="10" fill="#222" stroke="#666" stroke-width="1"/>
<path d="M2535.00,982.90 L2525.00,987.90 L2535.00,992.90 Z" fill="#DDD"/>
<path d="M2873.30,982.90 L2883.30,987.90 L2873.30,992.90 Z" fill="#DDD"/>
<text x="2539.00" y="992.10" font-size="12" fill="#999" text-anchor="start" >noise_mask_feather</text>
<text x="2854.30" y="992.10" font-size="12" fill="#DDD" text-anchor="end" >20</text>
<rect x="2519.00" y="1001.90" width="370.30" height="20.00" rx="10" fill="#222" stroke="#666" stroke-width="1"/>
<text x="2534.00" y="1016.10" font-size="12" fill="#999" text-anchor="start" >tiled_encode</text>
<text x="2864.30" y="1016.10" font-size="12" fill="#999" text-anchor="end" >disabled</text>
<circle cx="2874.30" cy="1011.90" r="7.2" fill="#333"/>
<rect x="2519.00" y="1025.90" width="370.30" height="20.00" rx="10" fill="#222" stroke="#666" stroke-width="1"/>
<text x="2534.00" y="1040.10" font-size="12" fill="#999" text-anchor="start" >tiled_decode</text>
<text x="2864.30" y="1040.10" font-size="12" fill="#999" text-anchor="end" >disabled</text>
<circle cx="2874.30" cy="1035.90" r="7.2" fill="#333"/>
<rect x="2514" y="885" width="380" height="35" fill="#222"/>
<rect x="2820.00" y="325.00" width="81.50" height="20.00" rx="5" fill="#0f1f0f" />
<text x="2860.75" y="339.30" font-size="12.5" fill="#fff" text-anchor="middle" textLength="69.5" lengthAdjust="spacingAndGlyphs">Impact-Pack</text>
</g>
</svg>
</body></html>
